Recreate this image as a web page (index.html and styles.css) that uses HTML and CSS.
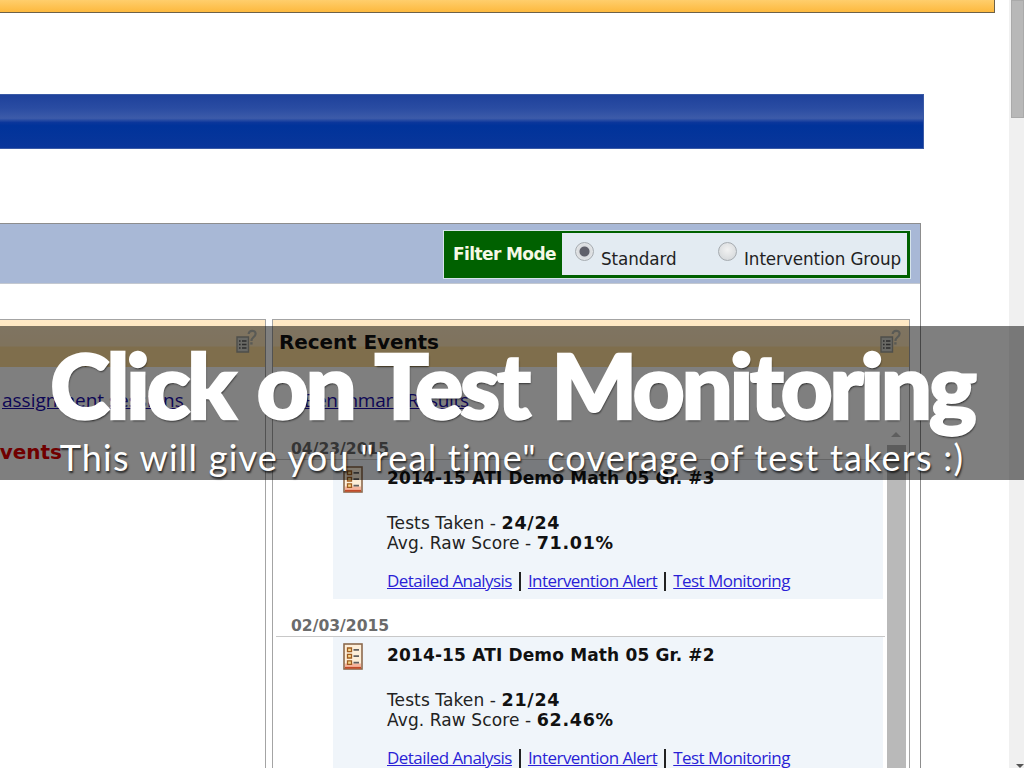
FILE: index.html
```html
<!DOCTYPE html>
<html lang="en">
<head>
<meta charset="utf-8">
<title>Click on Test Monitoring</title>
<link rel="stylesheet" href="styles.css">
</head>
<body>
<div class="window">
  <main class="page">
    <div class="top-bar"></div>
    <div class="blue-band"></div>
    <section class="panel">
      <header class="panel-head">
        <div class="filter">
          <span class="filter-label">Filter Mode</span>
          <div class="filter-options">
            <span class="option"><i class="radio radio-on"></i><span class="option-text">Standard</span></span>
            <span class="option"><i class="radio"></i><span class="option-text">Intervention Group</span></span>
          </div>
        </div>
      </header>
      <div class="cards">
        <section class="card card-left">
          <header class="card-head">
            <svg class="help" viewBox="0 0 22 24"><use href="#help-icon"/></svg>
          </header>
          <a class="left-link" href="#">assignment sessions</a>
          <p class="left-events">Events</p>
        </section>
        <section class="card card-right">
          <header class="card-head">
            <h2 class="card-title">Recent Events</h2>
            <svg class="help" viewBox="0 0 22 24"><use href="#help-icon"/></svg>
          </header>
          <a class="right-link" href="#">Benchmark Results</a>
          <div class="feed">
            <div class="feed-list">
              <article class="event">
                <h3 class="event-date">04/23/2015</h3>
                <div class="event-row">
                  <svg class="test-icon" viewBox="0 0 20 27"><use href="#test-icon"/></svg>
                  <div class="event-body">
                    <h4 class="event-title">2014-15 ATI Demo Math 05 Gr. #3</h4>
                    <p class="stat">Tests Taken - <b>24/24</b></p>
                    <p class="stat">Avg. Raw Score - <b>71.01%</b></p>
                    <p class="links"><a href="#">Detailed Analysis</a><span class="sep"></span><a href="#">Intervention Alert</a><span class="sep"></span><a href="#">Test Monitoring</a></p>
                  </div>
                </div>
              </article>
              <article class="event">
                <h3 class="event-date">02/03/2015</h3>
                <div class="event-row">
                  <svg class="test-icon" viewBox="0 0 20 27"><use href="#test-icon"/></svg>
                  <div class="event-body">
                    <h4 class="event-title">2014-15 ATI Demo Math 05 Gr. #2</h4>
                    <p class="stat">Tests Taken - <b>21/24</b></p>
                    <p class="stat">Avg. Raw Score - <b>62.46%</b></p>
                    <p class="links"><a href="#">Detailed Analysis</a><span class="sep"></span><a href="#">Intervention Alert</a><span class="sep"></span><a href="#">Test Monitoring</a></p>
                  </div>
                </div>
              </article>
            </div>
            <div class="feed-scroll">
              <span class="feed-arrow"></span>
              <span class="feed-thumb"></span>
            </div>
          </div>
        </section>
      </div>
    </section>
  </main>
  <aside class="page-scroll">
    <span class="page-thumb"></span>
    <span class="page-arrow"></span>
  </aside>
</div>

<div class="caption">
  <h1 class="caption-title">Click on Test Monitoring</h1>
  <p class="caption-sub">This will give you "real time" coverage of test takers :)</p>
</div>

<svg class="defs" width="0" height="0" aria-hidden="true">
  <symbol id="help-icon" viewBox="0 0 22 24">
    <path d="M2 8h11.5v15H2z" fill="#d2d2ca" stroke="#9c9c94" stroke-width="1.4"/>
    <path d="M4 12h1.6M7 12h4.5M4 15.5h1.6M7 15.5h4.5M4 19h1.6M7 19h4.5" stroke="#5a5a5a" stroke-width="1.6"/>
    <path d="M13.6 5C14 1 20.4 .6 20.6 4.6c.1 3.4-4.2 3.4-4.2 7.4" fill="none" stroke="#b4b4aa" stroke-width="2.2"/>
    <path d="M15.2 13.2h2.4v2.4h-2.4z" fill="#b4b4aa"/>
  </symbol>
  <symbol id="test-icon" viewBox="0 0 20 27">
    <rect x="1" y="1" width="18" height="25" fill="#fdeed8" stroke="#8c6a4e" stroke-width="1.6"/>
    <path d="M2 20.5h16v4.5H2z" fill="#f5b49c"/>
    <path d="M2 24.8h16" stroke="#c24a28" stroke-width="1.8"/>
    <path d="M4.5 5h4v3.6h-4zM4.5 11.4h4V15h-4zM4.5 17.8h4v3.6h-4z" fill="#f6d98e" stroke="#a05c20" stroke-width="1.3"/>
    <path d="M10.5 6.8h5.5M10.5 13.2h5.5M10.5 19.6h5.5" stroke="#5f5f5f" stroke-width="1.7"/>
  </symbol>
</svg>
</body>
</html>
```
FILE: styles.css
```css
* { box-sizing: border-box; }
html, body { margin: 0; padding: 0; height: 768px; overflow: hidden; background: #fff; }
body { font-family: "DejaVu Sans", Verdana, sans-serif; color: #111; }
h1, h2, h3, h4, p { margin: 0; font-weight: normal; }
.defs { position: absolute; }

.window { display: flex; height: 768px; overflow: hidden; }
.page { width: 1009px; flex: none; }

.top-bar {
  width: 995px; height: 13px;
  background: linear-gradient(#ffce6c, #fdb93e);
  border: 1px solid #6d6148; border-width: 0 1px 1px 0;
}
.blue-band {
  width: 924px; height: 55px; margin-top: 81px;
  background: linear-gradient(#1e419b 0%, #2a4ca2 25%, #3d5ba9 44%, #0a369b 52%, #00339a 58%, #0a369b 100%);
  border: 1px solid #3a5aa6; border-left: 0;
}

.panel {
  width: 921px; margin-top: 74px;
  border: 1px solid #8d8d8d; border-left: 0; border-bottom: 0;
}
.panel-head {
  height: 60px; background: #a8b8d6; border-bottom: 1px solid #c3c8d0;
  display: flex; justify-content: flex-end; align-items: flex-start;
  padding: 6px 9px 0 0;
}
.filter {
  display: flex; height: 49px; width: 468px;
  background: #006100; border: 1px solid #d6e4ea;
  padding: 2px 3px 3px 0;
}
.filter-label {
  width: 118px; padding: 9px 0 0 9px;
  font: bold 17px/24px "DejaVu Sans", sans-serif; letter-spacing: -.6px; color: #f6f9e6;
  white-space: nowrap;
}
.filter-options { flex: 1; background: #e3ebf2; display: flex; padding-left: 13px; }
.option { display: flex; width: 143px; padding-top: 9px; }
.radio {
  width: 19px; height: 19px; border-radius: 50%; flex: none;
  border: 1px solid #a6abb0;
  background: radial-gradient(circle at 50% 40%, #f2f2f2, #cfd3d6);
}
.radio-on { background: radial-gradient(circle, #60606a 0 4.5px, #d9dbde 5.5px, #eef0f2); }
.option-text { font: 16.8px/24px "DejaVu Sans", sans-serif; letter-spacing: -.1px; margin: 5px 0 0 7px; color: #222; white-space: nowrap; }

.cards { display: flex; padding: 35px 0 0 0; background: #fff; height: 500px; }
.card { border: 1px solid #a4a4a4; border-bottom: 0; overflow: hidden; }
.card-left { width: 266px; border-left: 0; }
.card-right { width: 638px; margin-left: 6px; }
.card-head {
  height: 47px; display: flex; justify-content: space-between; align-items: flex-start;
  background: linear-gradient(#ffe9c6 0, #ffe6ba 55%, #ffdc98 58%, #ffdc98 100%);
  padding: 9px 8px 0 6px;
}
.card-left .card-head { justify-content: flex-end; }
.help { width: 22px; height: 24px; }
.card-title { font: bold 20px/26px "DejaVu Sans", sans-serif; letter-spacing: -.1px; color: #111; }

.left-link, .right-link { display: block; color: #1a0dab; font: 19px/24px "Open Sans", sans-serif; white-space: nowrap; }
.left-link { margin: 21px 0 0 2px; }
.left-events { margin: 28px 0 0 -14px; color: #e00000; font: bold 20px/24px "DejaVu Sans", sans-serif; }
.right-link { margin: 21px 0 0 31px; letter-spacing: -.3px; }

.feed { display: flex; margin: 20px 0 0 3px; height: 360px; }
.feed-list { width: 609px; flex: none; }
.event { height: 177px; }
.event-date {
  height: 28px; padding: 6px 0 0 15px; border-bottom: 1px solid #c8c8c8;
  font: bold 15.6px/22px "DejaVu Sans", sans-serif; color: #6b6b6b;
}
.event-row { display: flex; width: 607px; height: 139px; padding-left: 57px; background: linear-gradient(90deg, #fff 57px, #f0f5fa 57px); }
.test-icon { width: 20px; height: 27px; margin: 6px 0 0 10px; flex: none; }
.event-body { padding: 5px 0 0 24px; flex: 1; }
.event-title { font: bold 17px/26px "DejaVu Sans", sans-serif; letter-spacing: .15px; color: #111; height: 48px; }
.stat { font: 17px/20px "DejaVu Sans", sans-serif; color: #222; letter-spacing: .1px; }
.stat b { font-size: 17.5px; letter-spacing: .7px; color: #111; }
.links { font: 17px/24px "Open Sans", sans-serif; margin-top: 16px; display: flex; align-items: center; letter-spacing: -.55px; }
.links a { color: #2a1fd6; }
.sep { width: 2px; height: 19px; background: #222; margin: 0 7px; }

.feed-scroll { width: 19px; margin: -4px 0 0 2px; display: flex; flex-direction: column; }
.feed-arrow { height: 17px; flex: none; position: relative; }
.feed-arrow::after {
  content: ""; position: absolute; left: 4px; top: 4px;
  border: 5px solid transparent; border-bottom-color: #bdbdbd; border-top: 0;
}
.feed-thumb { flex: 1; background: #b9b9b9; }

.page-scroll { flex: 1; background: #f0f0f0; display: flex; flex-direction: column; align-items: flex-end; position: relative; }
.page-thumb { width: 13px; height: 118px; background: #b8b8b8; border: 1px solid #aaa; }
.page-arrow {
  position: absolute; right: 0; bottom: 0;
  border: 4px solid transparent; border-top-color: #555; border-bottom: 0;
}

.caption {
  position: absolute; left: 0; top: 326px; width: 1024px; height: 154px;
  background: rgba(0, 0, 0, .5); color: #fff;
  display: flex; flex-direction: column; align-items: center;
  text-align: center; white-space: nowrap;
}
.caption-title {
  font: 900 90px/96px Lato, sans-serif; margin-top: 10px; letter-spacing: -3px; word-spacing: 5px;
  -webkit-text-stroke: 2.5px #fff;
  text-shadow: 1px 2px 2px rgba(0,0,0,.7);
}
.caption-sub {
  font: 400 36px/44px Lato, sans-serif; margin-top: 3px; letter-spacing: 1.22px;
  text-shadow: 1px 2px 2px rgba(0,0,0,.7);
}
```
